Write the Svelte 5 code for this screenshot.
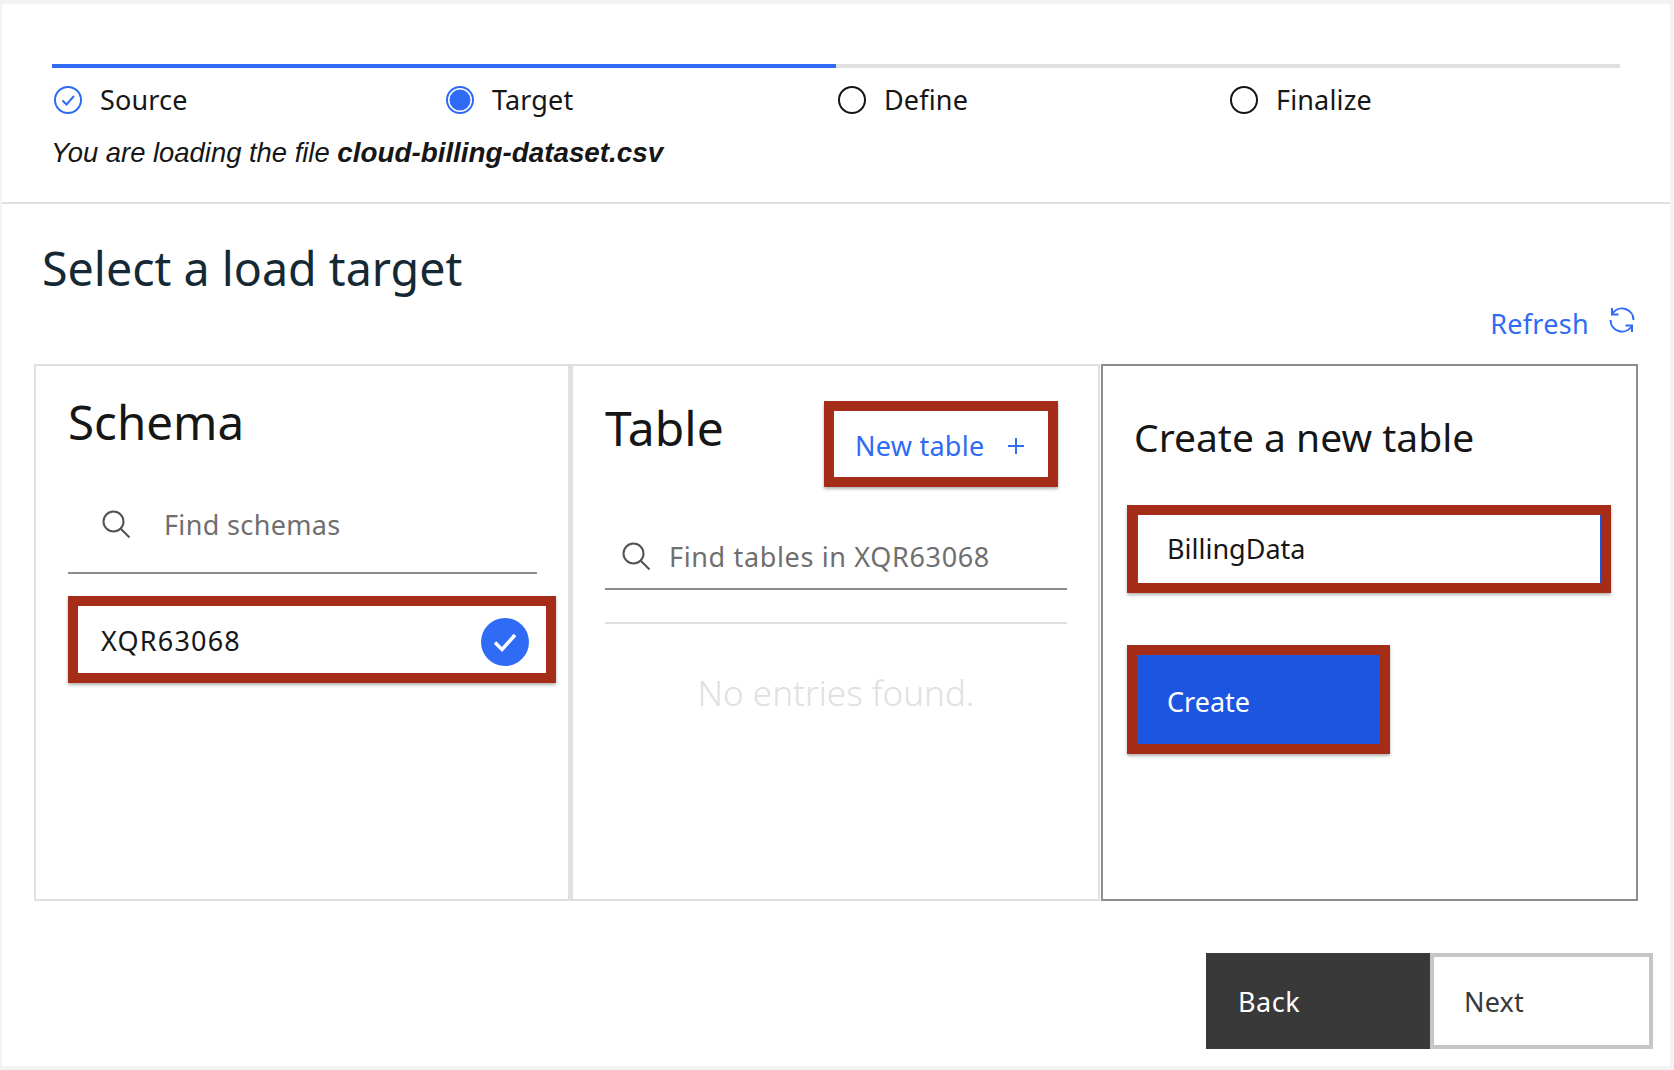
<script lang="ts">
  const steps = [
    { label: 'Source', state: 'done' },
    { label: 'Target', state: 'current' },
    { label: 'Define', state: 'todo' },
    { label: 'Finalize', state: 'todo' }
  ];
</script>

{#snippet searchIcon()}
  <svg class="search-icon" viewBox="0 0 28 28" fill="none" stroke="#525252" stroke-width="2">
    <circle cx="11.5" cy="11.5" r="10" />
    <path d="M18.8 18.8 L27.5 27.5" />
  </svg>
{/snippet}

<div class="card">
  <header class="wizard">
    <div class="progress"><div class="progress-fill"></div></div>
    <div class="steps">
      {#each steps as step}
        <div class="step">
          {#if step.state === 'done'}
            <svg class="step-icon" viewBox="0 0 28 28" fill="none" stroke="#2f6bf5" stroke-width="2">
              <circle cx="14" cy="14" r="13" />
              <path d="M8.5 14.5 L12.5 18.5 L20 10" />
            </svg>
          {:else if step.state === 'current'}
            <svg class="step-icon" viewBox="0 0 28 28" fill="none">
              <circle cx="14" cy="14" r="13" stroke="#2f6bf5" stroke-width="2" />
              <circle cx="14" cy="14" r="10.5" fill="#2f6bf5" />
            </svg>
          {:else}
            <svg class="step-icon" viewBox="0 0 28 28" fill="none" stroke="#161616" stroke-width="2">
              <circle cx="14" cy="14" r="13" />
            </svg>
          {/if}
          <span>{step.label}</span>
        </div>
      {/each}
    </div>
    <p class="loading">You are loading the file <strong>cloud-billing-dataset.csv</strong></p>
  </header>

  <main>
    <h1>Select a load target</h1>
    <div class="refresh-row">
      <span class="refresh">Refresh</span>
      <svg class="refresh-icon" viewBox="0 0 26 26" fill="none" stroke="#2f6bf5" stroke-width="2">
        <path d="M3.5 6.5 A11.5 11.5 0 0 1 24.5 13" />
        <path d="M3 1 L3 7.5 L9.5 7.5" />
        <path d="M22.5 19.5 A11.5 11.5 0 0 1 1.5 13" />
        <path d="M23 25 L23 18.5 L16.5 18.5" />
      </svg>
    </div>

    <div class="panels">
      <section class="panel schema">
        <h2>Schema</h2>
        <div class="search schema-search">
          {@render searchIcon()}
          <span>Find schemas</span>
        </div>
        <div class="callout schema-row">
          <span>XQR63068</span>
          <span class="check">
            <svg viewBox="0 0 48 48" fill="none" stroke="#fff" stroke-width="3.5">
              <path d="M14 24.5 L21 31.5 L34 17" />
            </svg>
          </span>
        </div>
      </section>

      <section class="panel table">
        <div class="table-head">
          <h2>Table</h2>
          <div class="callout new-table">
            <span>New table</span>
            <svg class="plus" viewBox="0 0 16 16" stroke="#2f6bf5" stroke-width="2">
              <path d="M8 0 V16 M0 8 H16" />
            </svg>
          </div>
        </div>
        <div class="search table-search">
          {@render searchIcon()}
          <span>Find tables in XQR63068</span>
        </div>
        <div class="rule"></div>
        <p class="empty">No entries found.</p>
      </section>

      <section class="panel create">
        <h3>Create a new table</h3>
        <div class="callout name-field">
          <div class="name-input">BillingData</div>
        </div>
        <div class="callout create-btn">
          <div class="create-fill">Create</div>
        </div>
      </section>
    </div>

    <div class="actions">
      <div class="btn back">Back</div>
      <div class="btn next">Next</div>
    </div>
  </main>
</div>

<style>
  :global(body) {
    background: #f3f3f3;
  }

  .card {
    box-sizing: border-box;
    width: 1668px;
    height: 1062px;
    margin: 4px 0 0 2px;
    background: #fff;
    font-family: "Noto Sans", sans-serif;
    color: #161616;
    overflow: hidden;
  }

  .wizard {
    box-sizing: border-box;
    height: 200px;
    padding: 60px 50px 0;
    border-bottom: 2px solid #e0e0e0;
  }

  .progress {
    width: 1568px;
    height: 4px;
    background: #e0e0e0;
  }

  .progress-fill {
    width: 50%;
    height: 100%;
    background: #2f6bf5;
  }

  .steps {
    display: grid;
    grid-template-columns: repeat(4, 392px);
    margin-top: 18px;
    padding-left: 2px;
  }

  .step {
    display: flex;
    align-items: center;
    gap: 18px;
    height: 28px;
    font-size: 27px;
    line-height: 28px;
    letter-spacing: 0.15px;
  }

  .step-icon {
    width: 28px;
    height: 28px;
    flex: none;
  }

  .loading {
    margin: 22px 0 0 -1px;
    font-family: "Liberation Sans", sans-serif;
    font-style: italic;
    font-size: 27.4px;
    line-height: 34px;
  }

  .loading strong {
    font-size: 27.8px;
    font-weight: 700;
  }

  h1 {
    margin: 36px 0 0 40px;
    font-size: 46.6px;
    font-weight: 400;
    line-height: 56px;
    color: #152935;
  }

  .refresh-row {
    display: flex;
    justify-content: flex-end;
    gap: 20px;
    height: 32px;
    margin-top: 12px;
    padding-right: 35px;
  }

  .refresh {
    font-size: 27px;
    line-height: 32px;
    letter-spacing: 0.3px;
    color: #2f6bf5;
  }

  .refresh-icon {
    width: 26px;
    height: 26px;
    margin-top: -1px;
  }

  .panels {
    display: grid;
    grid-template-columns: 536px 530px 538px;
    column-gap: 0;
    height: 537px;
    margin: 24px 0 0 32px;
  }

  .panel {
    box-sizing: border-box;
    border: 2px solid #e0e0e0;
  }

  h2 {
    margin: 0;
    font-size: 47.5px;
    font-weight: 400;
    line-height: 56px;
  }

  .callout {
    box-sizing: border-box;
    border: 10px solid #a52c17;
    box-shadow: 0 2px 3px rgba(0, 0, 0, 0.3);
  }

  .search {
    display: flex;
    align-items: center;
    border-bottom: 2px solid #8d8d8d;
    font-size: 27px;
    color: #6f6f6f;
  }

  .search-icon {
    width: 28px;
    height: 28px;
    flex: none;
  }

  .schema {
    padding: 28px 0 0 32px;
  }

  .schema-search {
    box-sizing: border-box;
    width: 469px;
    height: 80px;
    margin-top: 44px;
    padding: 0 0 18px 34px;
    gap: 34px;
    letter-spacing: 0.35px;
  }

  .schema-row {
    display: flex;
    align-items: center;
    justify-content: space-between;
    width: 488px;
    height: 87px;
    margin-top: 22px;
    padding: 2px 17px 0 23px;
    font-size: 27px;
    letter-spacing: 1.2px;
  }

  .check {
    width: 48px;
    height: 48px;
    margin-top: 2px;
    border-radius: 50%;
    background: #2f6bf5;
  }

  .check svg {
    display: block;
  }

  .table {
    border-left-width: 3px;
    padding: 35px 0 0 32px;
  }

  .table-head {
    display: flex;
    align-items: flex-start;
  }

  .table-head h2 {
    width: 219px;
    margin-top: -1px;
    font-size: 48px;
  }

  .new-table {
    display: flex;
    align-items: center;
    justify-content: space-between;
    width: 234px;
    height: 86px;
    padding: 3px 24px 0 21px;
    font-size: 27px;
    letter-spacing: 0.25px;
    color: #2f6bf5;
  }

  .plus {
    width: 16px;
    height: 16px;
  }

  .table-search {
    box-sizing: border-box;
    width: 462px;
    height: 61px;
    margin-top: 42px;
    padding: 0 0 5px 17px;
    gap: 19px;
    letter-spacing: 0.65px;
  }

  .rule {
    width: 462px;
    height: 2px;
    margin-top: 32px;
    background: #e0e0e0;
  }

  .empty {
    width: 462px;
    margin: 44px 0 0;
    font-size: 35px;
    font-weight: 300;
    line-height: 50px;
    text-align: center;
    color: #e0e0e0;
  }

  .create {
    margin-left: 1px;
    width: 537px;
    border-color: #8d8d8d;
    padding: 46px 0 0 24px;
  }

  h3 {
    margin: 0 0 0 7px;
    font-size: 39px;
    font-weight: 400;
    line-height: 50px;
  }

  .name-field {
    width: 484px;
    height: 88px;
    margin-top: 43px;
  }

  .name-input {
    box-sizing: border-box;
    height: 100%;
    padding-left: 29px;
    border: solid #1c55e0;
    border-width: 0 1px;
    font-size: 27px;
    line-height: 68px;
  }

  .create-btn {
    width: 263px;
    height: 109px;
    margin-top: 52px;
  }

  .create-fill {
    box-sizing: border-box;
    height: 100%;
    padding: 4px 0 0 30px;
    background: #1c55e0;
    color: #fff;
    font-size: 27px;
    line-height: 85px;
  }

  .actions {
    display: flex;
    justify-content: flex-end;
    margin-top: 52px;
    padding-right: 17px;
  }

  .btn {
    box-sizing: border-box;
    width: 224px;
    height: 96px;
    padding-top: 1px;
    font-size: 27px;
    line-height: 96px;
  }

  .back {
    padding-left: 32px;
    background: #393939;
    color: #fff;
    letter-spacing: 0.5px;
  }

  .next {
    width: 223px;
    padding-left: 30px;
    border: 4px solid #c6c6c6;
    line-height: 88px;
    color: #393939;
    letter-spacing: 0.2px;
  }
</style>
